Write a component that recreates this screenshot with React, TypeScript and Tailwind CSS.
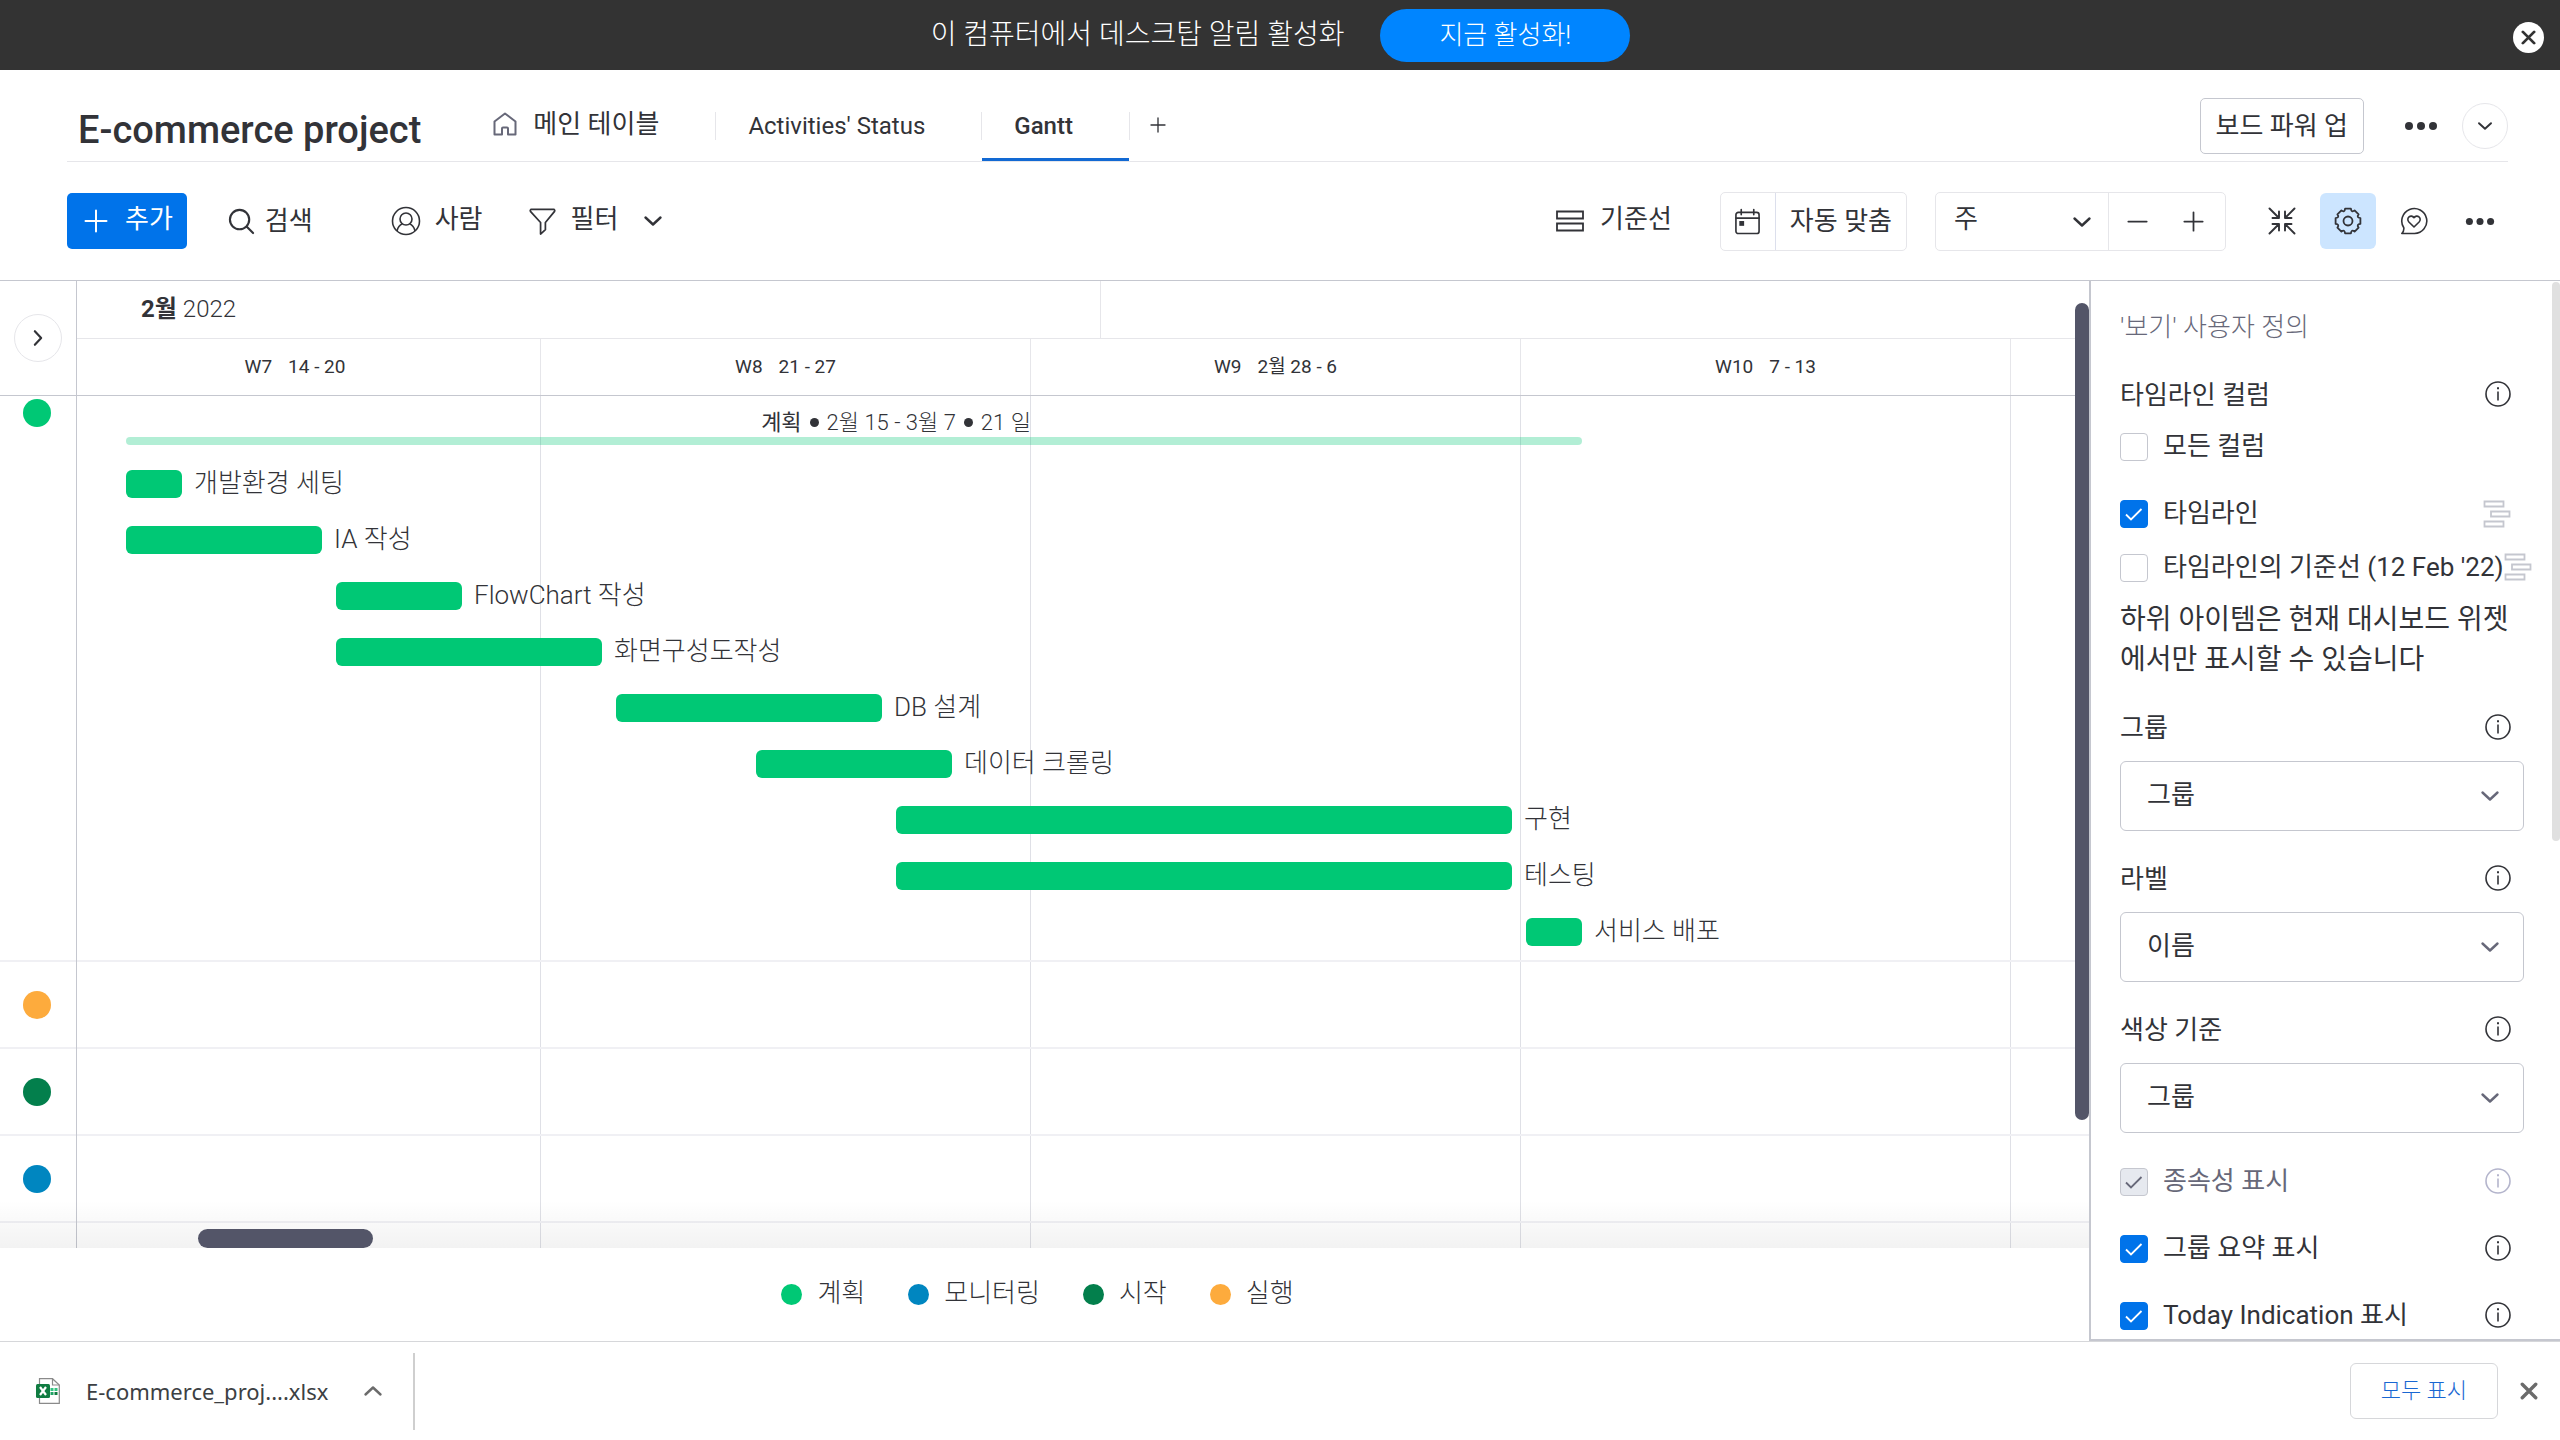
import { useState } from "react";
import type { ReactNode } from "react";

const DAY = 70;
const BAR_GAP = 14;

const weeks = [
  { name: "W7", range: "14 - 20" },
  { name: "W8", range: "21 - 27" },
  { name: "W9", range: "2월 28 - 6" },
  { name: "W10", range: "7 - 13" },
];

const tasks = [
  { name: "개발환경 세팅", start: 0, days: 1 },
  { name: "IA 작성", start: 0, days: 3 },
  { name: "FlowChart 작성", start: 3, days: 2 },
  { name: "화면구성도작성", start: 3, days: 4 },
  { name: "DB 설계", start: 7, days: 4 },
  { name: "데이터 크롤링", start: 9, days: 3 },
  { name: "구현", start: 11, days: 9 },
  { name: "테스팅", start: 11, days: 9 },
  { name: "서비스 배포", start: 20, days: 1 },
];

const legend = [
  { name: "계획", color: "bg-[#00c875]" },
  { name: "모니터링", color: "bg-[#0086c0]" },
  { name: "시작", color: "bg-[#037f4c]" },
  { name: "실행", color: "bg-[#fdab3d]" },
];

/* ---------- icons ---------- */

type IconProps = { className?: string };

function Chevron({ className = "" }: IconProps) {
  return (
    <svg viewBox="0 0 20 20" fill="none" stroke="currentColor" strokeWidth="2.4" strokeLinecap="round" strokeLinejoin="round" className={className} aria-hidden="true">
      <path d="M2.5 6.5 10 13.5 17.5 6.5" />
    </svg>
  );
}

function Plus({ className = "" }: IconProps) {
  return (
    <svg viewBox="0 0 24 24" fill="none" stroke="currentColor" strokeWidth="2" strokeLinecap="round" className={className} aria-hidden="true">
      <path d="M12 1.5v21M1.5 12h21" />
    </svg>
  );
}

function Minus({ className = "" }: IconProps) {
  return (
    <svg viewBox="0 0 24 24" fill="none" stroke="currentColor" strokeWidth="2" strokeLinecap="round" className={className} aria-hidden="true">
      <path d="M1.5 12h21" />
    </svg>
  );
}

function Dots({ className = "" }: IconProps) {
  return (
    <svg viewBox="0 0 34 12" fill="currentColor" className={className} aria-hidden="true">
      <circle cx="5" cy="6" r="4" />
      <circle cx="17" cy="6" r="4" />
      <circle cx="29" cy="6" r="4" />
    </svg>
  );
}

function Home({ className = "" }: IconProps) {
  return (
    <svg viewBox="0 0 24 24" fill="none" stroke="currentColor" strokeWidth="2" strokeLinejoin="round" className={className} aria-hidden="true">
      <path d="M1.5 9.5 12 1.5l10.5 8v13H15V16.500q0-1-1-1h-4q-1 0-1 1v6H1.500z" />
    </svg>
  );
}

function SearchIcon({ className = "" }: IconProps) {
  return (
    <svg viewBox="0 0 28 28" fill="none" stroke="currentColor" strokeWidth="2.2" strokeLinecap="round" className={className} aria-hidden="true">
      <circle cx="12" cy="12" r="10" />
      <path d="M19.5 19.5 26 26" />
    </svg>
  );
}

function Person({ className = "" }: IconProps) {
  return (
    <svg viewBox="0 0 30 30" fill="none" stroke="currentColor" strokeWidth="1.6" strokeLinejoin="round" className={className} aria-hidden="true">
      <circle cx="15" cy="15" r="13.5" />
      <circle cx="15" cy="13" r="6" />
      <path d="M6 25c.8-3.800 3-6.300 5.500-7.300M24 25c-.8-3.800-3-6.300-5.500-7.300" />
    </svg>
  );
}

function Filter({ className = "" }: IconProps) {
  return (
    <svg viewBox="0 0 28 28" fill="none" stroke="currentColor" strokeWidth="1.8" strokeLinejoin="round" className={className} aria-hidden="true">
      <path d="M2 1.500h24q1.200 1 .3 2.300L17 15v7.500l-5 4.500V15L1.700 3.800Q.8 2.500 2 1.500z" />
    </svg>
  );
}

function Baseline({ className = "" }: IconProps) {
  return (
    <svg viewBox="0 0 28 22" fill="none" stroke="currentColor" strokeWidth="1.8" className={className} aria-hidden="true">
      <path d="M1 1.5h26v7H1zM1 13.5h26v7H1z" />
    </svg>
  );
}

function CalendarIcon({ className = "" }: IconProps) {
  return (
    <svg viewBox="0 0 28 28" fill="none" stroke="currentColor" strokeWidth="1.7" strokeLinecap="round" className={className} aria-hidden="true">
      <rect x="2" y="4.5" width="24" height="22" rx="2.5" />
      <path d="M2 10.5h24M7.5 1.5V7M20.5 1.5V7" />
      <rect x="5.5" y="13.5" width="5" height="5" fill="currentColor" stroke="none" />
    </svg>
  );
}

function Collapse({ className = "" }: IconProps) {
  return (
    <svg viewBox="0 0 28 28" fill="none" stroke="currentColor" strokeWidth="1.9" strokeLinecap="round" strokeLinejoin="round" className={className} aria-hidden="true">
      <path d="M1.5 1.500 10.500 10.500M11 4.500V11H4.500M26.500 1.500 17.500 10.500M17 4.500V11h6.500M1.500 26.500 10.500 17.500M11 23.500V17H4.500M26.500 26.500 17.500 17.500M17 23.500V17h6.500" />
    </svg>
  );
}

function Gear({ className = "" }: IconProps) {
  return (
    <svg viewBox="0 0 28 28" fill="none" stroke="currentColor" strokeWidth="1.8" strokeLinejoin="round" className={className} aria-hidden="true">
      <path d="M11.100 1.600h5.800Q17.400 5.900 20.600 3.400L24.600 7.400Q22.100 10.600 26.400 11.100v5.800Q22.100 17.400 24.600 20.600L20.600 24.600Q17.400 22.100 16.900 26.400h-5.800Q10.600 22.100 7.400 24.600L3.400 20.600Q5.900 17.400 1.600 16.900v-5.800Q5.900 10.600 3.400 7.400L7.400 3.400Q10.600 5.900 11.100 1.600z" />
      <circle cx="14" cy="14" r="4.5" />
    </svg>
  );
}

function HeartBubble({ className = "" }: IconProps) {
  return (
    <svg viewBox="0 0 28 28" fill="none" stroke="currentColor" strokeWidth="1.600" strokeLinejoin="round" className={className} aria-hidden="true">
      <path d="M3.800 20.800A12.500 12.500 0 1 1 14.500 26.500H1.800q2.400-2.200 2-5.700z" />
      <path d="M14 20 8.900 15c-3.400-3.900 2.100-8.400 5.100-4.300 3-4.100 8.500.4 5.100 4.300z" />
    </svg>
  );
}

function Info({ className = "" }: IconProps) {
  return (
    <svg viewBox="0 0 26 26" fill="none" stroke="currentColor" strokeWidth="1.6" className={className} aria-hidden="true">
      <circle cx="13" cy="13" r="12" />
      <path d="M13 10.5v9" />
      <path d="M13 6.2v2" strokeWidth="2" />
    </svg>
  );
}

function TimelineGlyph({ className = "" }: IconProps) {
  return (
    <svg viewBox="0 0 28 28" fill="none" stroke="currentColor" strokeWidth="1.8" className={className} aria-hidden="true">
      <path d="M1.5 1.5h19v5h-19zM8 11.5h18.5v5H8zM1.5 21.5h19v5h-19z" />
    </svg>
  );
}

function CloseMark({ className = "" }: IconProps) {
  return (
    <svg viewBox="0 0 16 16" fill="none" stroke="currentColor" strokeWidth="3" strokeLinecap="round" className={className} aria-hidden="true">
      <path d="M2 2l12 12M14 2 2 14" />
    </svg>
  );
}

function ExcelIcon({ className = "" }: IconProps) {
  return (
    <svg viewBox="0 0 24 26" className={className} aria-hidden="true">
      <path d="M3.5.7h13L23.300 7v18.300H3.500z" fill="#fff" stroke="#8a8a8a" strokeWidth="1.2" />
      <path d="M16.5.7V7h6.800" fill="none" stroke="#8a8a8a" strokeWidth="1.2" />
      <rect x="14.5" y="10" width="3" height="3" fill="#33c481" />
      <rect x="18.5" y="10" width="3" height="3" fill="#33c481" />
      <rect x="14.5" y="14" width="3" height="3" fill="#21a366" />
      <rect x="18.5" y="14" width="3" height="3" fill="#107c41" />
      <rect y="6" width="14" height="14" rx="1.5" fill="#107c41" />
      <path d="M4 9l6 8M10 9l-6 8" stroke="#fff" strokeWidth="2.2" />
    </svg>
  );
}

/* ---------- page parts ---------- */

function Banner() {
  return (
    <div className="flex h-[70px] items-center bg-[#333333] pr-4 text-white">
      <div className="flex flex-1 items-center justify-center gap-9 pl-12">
        <span className="text-[28px] leading-[66px] font-light">이 컴퓨터에서 데스크탑 알림 활성화</span>
        <button className="h-[53px] rounded-full bg-[#0085ff] px-[59px] text-[26px] leading-[48px] font-light">지금 활성화!</button>
      </div>
      <button aria-label="닫기" className="mt-1 flex size-[31px] items-center justify-center rounded-full bg-white text-[#333333]">
        <CloseMark className="size-[15px]" />
      </button>
    </div>
  );
}

function BoardHeader() {
  return (
    <header className="mr-[52px] ml-[67px] flex h-[92px] items-center border-b border-[#e6e6ea]">
      <h1 className="mt-7 pl-[11px] text-[38px] leading-[50px] font-medium">E-commerce project</h1>
      <nav className="ml-11 flex h-full items-end text-2xl">
        <button className="flex h-[92px] items-center gap-4 pt-[22px] pr-14 pb-1 pl-7">
          <Home className="size-6 text-[#676879]" />
          <span className="text-[26px]">메인 테이블</span>
        </button>
        <i className="mb-[21px] h-7 w-px bg-[#e6e6ea]" />
        <button className="h-[92px] pt-[25px] pr-14 pb-1 pl-8">Activities&apos; Status</button>
        <i className="mb-[21px] h-7 w-px bg-[#e6e6ea]" />
        <button className="h-[92px] border-b-[3px] border-[#1269d3] pt-[25px] pr-14 pb-px pl-8 font-medium">Gantt</button>
        <i className="mb-[21px] h-7 w-px bg-[#e6e6ea]" />
        <button aria-label="보기 추가" className="h-[92px] px-5 pt-[19px]">
          <Plus className="size-4" />
        </button>
      </nav>
      <div className="ml-auto flex items-center pt-5">
        <button className="h-14 rounded-[5px] border border-[#c5c7cf] px-[15px] text-[26px] leading-[50px]">보드 파워 업</button>
        <button aria-label="더 보기" className="ml-[39px]">
          <Dots className="h-3 w-[36px]" />
        </button>
        <button aria-label="접기" className="ml-[23px] flex size-[46px] items-center justify-center rounded-full border border-[#e6e6ea]">
          <Chevron className="size-4" />
        </button>
      </div>
    </header>
  );
}

function Toolbar() {
  return (
    <div className="flex h-[119px] items-center border-b border-[#c5c7cf] pr-[52px] pl-[67px] text-[26px] leading-[50px]">
      <button className="flex h-14 items-center gap-[17px] rounded-[5px] bg-[#0073ea] pr-[14px] pl-[17px] text-white">
        <Plus className="size-6" />
        <span className="-mt-1">추가</span>
      </button>
      <button className="ml-[41px] flex items-center gap-[10px]">
        <SearchIcon className="size-[27px]" />
        <span>검색</span>
      </button>
      <button className="ml-[78px] flex items-center gap-[14px]">
        <Person className="size-[30px]" />
        <span className="-mt-1">사람</span>
      </button>
      <button className="ml-[46px] flex items-center gap-[15px]">
        <Filter className="size-[27px]" />
        <span className="-mt-1">필터</span>
      </button>
      <button aria-label="필터 옵션" className="ml-[25px]">
        <Chevron className="size-5" />
      </button>

      <button className="ml-auto flex items-center gap-4">
        <Baseline className="h-[22px] w-7" />
        <span className="-mt-1">기준선</span>
      </button>
      <div className="ml-12 flex h-[59px] items-stretch rounded-[5px] border border-[#e6e6ea]">
        <button aria-label="오늘" className="flex w-[55px] items-center justify-center border-r border-[#dcdfec]">
          <CalendarIcon className="size-[27px]" />
        </button>
        <button className="px-[14px]">자동 맞춤</button>
      </div>
      <div className="ml-7 flex h-[59px] items-stretch rounded-[5px] border border-[#e6e6ea]">
        <div className="relative w-[173px] border-r border-[#e6e6ea]">
          <select aria-label="확대 단위" defaultValue="주" className="size-full appearance-none bg-transparent pb-1 pl-[18px]">
            <option>주</option>
          </select>
          <Chevron className="pointer-events-none absolute top-[19px] right-4 size-5" />
        </div>
        <button aria-label="축소" className="w-[58px] pl-[18px]">
          <Minus className="size-[21px]" />
        </button>
        <button aria-label="확대" className="w-[58px] pl-[16px]">
          <Plus className="size-[21px]" />
        </button>
      </div>
      <button aria-label="모두 접기" className="ml-7 flex size-14 items-center justify-center">
        <Collapse className="size-[28px]" />
      </button>
      <button aria-label="설정" className="ml-[10px] flex size-14 items-center justify-center rounded-[6px] bg-[#cce5ff]">
        <Gear className="size-[28px]" />
      </button>
      <button aria-label="피드백" className="ml-[10px] flex size-14 items-center justify-center">
        <HeartBubble className="size-[28px]" />
      </button>
      <button aria-label="더 보기" className="ml-[10px] flex h-14 w-[56px] items-center justify-center">
        <Dots className="h-[11px] w-[30px]" />
      </button>
    </div>
  );
}

function GroupCell({ color }: { color: string }) {
  return (
    <div className="flex h-[87px] items-center border-b-2 border-[#f0f0f4] pl-[23px]">
      <i className={`size-7 rounded-full ${color}`} />
    </div>
  );
}

function GroupRail() {
  return (
    <div className="flex w-[77px] shrink-0 flex-col border-r border-[#c5c7cf]">
      <div className="flex h-[115px] items-center justify-center border-b border-[#c5c7cf]">
        <button aria-label="펼치기" className="flex size-12 items-center justify-center rounded-full border border-[#e6e6ea]">
          <Chevron className="size-[18px] -rotate-90" />
        </button>
      </div>
      <div className="h-[566px] border-b-2 border-[#f0f0f4] pt-[3px] pl-[23px]">
        <i className="block size-7 rounded-full bg-[#00c875]" />
      </div>
      <GroupCell color="bg-[#fdab3d]" />
      <GroupCell color="bg-[#037f4c]" />
      <GroupCell color="bg-[#0086c0]" />
    </div>
  );
}

function Timeline() {
  return (
    <div className="relative flex min-w-0 flex-1 flex-col overflow-hidden">
      <div className="flex h-[58px] border-b border-[#e6e6ea] text-2xl">
        <div className="w-[1024px] shrink-0 border-r border-[#e6e6ea] pl-16 leading-[57px]">
          <b>2월</b> <span className="font-light">2022</span>
        </div>
      </div>
      <div className="-ml-[27px] flex h-[57px] border-b border-[#c5c7cf] text-[19px] leading-[55px]">
        {weeks.map((w) => (
          <div key={w.name} className="flex w-[491px] shrink-0 justify-center gap-4 border-r border-[#e6e6ea] not-first:w-[490px]">
            <span>{w.name}</span>
            <span>{w.range}</span>
          </div>
        ))}
      </div>
      <div className="relative flex-1">
        <div className="absolute inset-y-0 -left-[27px] flex">
          {weeks.map((w) => (
            <i key={w.name} className="w-[491px] shrink-0 border-r border-[#dfe0e6] not-first:w-[490px]" />
          ))}
        </div>
        <div className="relative h-[566px] border-b-2 border-[#f0f0f4] pl-[49px]">
          <div className="h-[60px] w-[1456px]">
            <p className="flex h-[41px] items-center justify-center gap-2 pt-3 pl-[84px] text-[22px] leading-[29px] font-light">
              <b>계획</b>
              <i className="size-[9px] rounded-full bg-[#323338]" />
              <span>2월 15 - 3월 7</span>
              <i className="size-[9px] rounded-full bg-[#323338]" />
              <span>21 일</span>
            </p>
            <div className="h-2 rounded-full bg-[#00c875]/30" />
          </div>
          {tasks.map((t) => (
            <div key={t.name} className="flex h-14 items-center gap-3" style={{ paddingLeft: t.start * DAY }}>
              <div className="h-7 shrink-0 rounded-[6px] bg-[#00c875]" style={{ width: t.days * DAY - BAR_GAP }} />
              <span className="-mt-0.5 text-[26px] leading-9 font-light whitespace-nowrap">{t.name}</span>
            </div>
          ))}
        </div>
        <div className="relative h-[87px] border-b-2 border-[#f0f0f4]" />
        <div className="relative h-[87px] border-b-2 border-[#f0f0f4]" />
        <div className="relative h-[87px] border-b-2 border-[#f0f0f4]" />
      </div>
      <i className="absolute top-[22px] right-0 h-[817px] w-[14px] rounded-full bg-[#535568]" />
    </div>
  );
}

function Legend() {
  return (
    <ul className="flex h-[93px] items-center justify-center gap-[43px] bg-white pr-[14px] text-[26px] leading-[88px] font-light">
      {legend.map((l) => (
        <li key={l.name} className="flex items-center gap-[15px]">
          <i className={`size-[21px] rounded-full ${l.color}`} />
          <span className="-mt-1">{l.name}</span>
        </li>
      ))}
    </ul>
  );
}

type CheckProps = { label: string; checked?: boolean; disabled?: boolean; children?: ReactNode };

function Check({ label, checked = false, disabled = false, children }: CheckProps) {
  const [on, setOn] = useState(checked);
  return (
    <div className="flex h-7 items-center">
      <label className={`flex items-center gap-[15px] whitespace-nowrap ${disabled ? "text-[#676879]" : ""}`}>
        <span className="relative size-7">
          <input
            type="checkbox"
            checked={on}
            disabled={disabled}
            onChange={() => setOn(!on)}
            className="block size-7 appearance-none rounded-[4px] border border-[#c5c7cf] bg-white checked:border-[#0073ea] checked:bg-[#0073ea] disabled:border-[#c5c7cf] disabled:bg-[#e6e9ef]"
          />
          {on && (
            <svg viewBox="0 0 28 28" fill="none" stroke={disabled ? "#676879" : "#fff"} strokeWidth="1.8" className="pointer-events-none absolute inset-0 size-7" aria-hidden="true">
              <path d="m6 14.5 5 5L21.500 9" />
            </svg>
          )}
        </span>
        <span className="-mt-0.5">{label}</span>
      </label>
      {children}
    </div>
  );
}

function InfoButton({ muted = false }: { muted?: boolean }) {
  return (
    <button aria-label="정보" className={`mr-[13px] -mt-0.5 ml-auto ${muted ? "text-[#b4b5cc]" : ""}`}>
      <Info className="size-[26px]" />
    </button>
  );
}

function Field({ id, label, value }: { id: string; label: string; value: string }) {
  return (
    <div className="mb-[30px]">
      <div className="flex h-[35px] items-center">
        <label htmlFor={id}>{label}</label>
        <InfoButton />
      </div>
      <div className="relative mt-4 h-[70px]">
        <select id={id} defaultValue={value} className="size-full appearance-none rounded-[6px] border border-[#c5c7cf] bg-white pb-0.5 pl-[26px]">
          <option>{value}</option>
        </select>
        <Chevron className="pointer-events-none absolute top-[25px] right-6 size-5 text-[#676879]" />
      </div>
    </div>
  );
}

function SettingsPanel() {
  return (
    <aside className="relative w-[471px] shrink-0 border-b-2 border-l-2 border-[#c5c7cf] bg-white pr-9 pl-[29px] text-[26px] leading-10">
      <h2 className="pt-[26px] font-light text-[#676879]">&apos;보기&apos; 사용자 정의</h2>
      <div className="mt-[34px] flex h-7 items-center">
        <h3>타임라인 컬럼</h3>
        <InfoButton />
      </div>
      <div className="mt-6">
        <Check label="모든 컬럼" />
      </div>
      <div className="mt-[39px]">
        <Check label="타임라인" checked>
          <TimelineGlyph className="mr-[13px] ml-auto size-7 text-[#c5c7cf]" />
        </Check>
      </div>
      <div className="mt-[26px]">
        <Check label="타임라인의 기준선 (12 Feb '22)">
          <TimelineGlyph className="-mt-0.5 size-7 shrink-0 text-[#c5c7cf]" />
        </Check>
      </div>
      <p className="mt-[18px] mb-[30px] text-[28px] break-all">하위 아이템은 현재 대시보드 위젯에서만 표시할 수 있습니다</p>
      <Field id="group-by" label="그룹" value="그룹" />
      <Field id="label-by" label="라벨" value="이름" />
      <Field id="color-by" label="색상 기준" value="그룹" />
      <div className="mt-[35px] flex flex-col gap-[39px]">
        <Check label="종속성 표시" checked disabled>
          <InfoButton muted />
        </Check>
        <Check label="그룹 요약 표시" checked>
          <InfoButton />
        </Check>
        <Check label="Today Indication 표시" checked>
          <InfoButton />
        </Check>
      </div>
      <i className="absolute top-px right-0 h-[559px] w-2 rounded-full bg-[#e0e0e0]" />
    </aside>
  );
}

function DownloadBar() {
  return (
    <footer className="flex h-[99px] items-center border-t border-[#d6d7da] bg-white pr-[22px]">
      <button className="flex items-center pl-9 [font-family:'Noto_Sans','Noto_Sans_CJK_KR',sans-serif] text-[22px] text-[#3c4043]">
        <ExcelIcon className="h-[26px] w-6" />
        <span className="ml-[26px]">E-commerce_proj....xlsx</span>
      </button>
      <button aria-label="다운로드 메뉴" className="ml-[35px] text-[#6b6b6b]">
        <Chevron className="size-5 rotate-180" />
      </button>
      <i className="ml-[30px] h-[77px] w-[2px] bg-[#cfcfcf]" />
      <button className="ml-auto h-14 rounded-[6px] border border-[#d6d7da] px-[30px] text-[22px] leading-[48px] font-light text-[#1967d2]">모두 표시</button>
      <button aria-label="닫기" className="ml-[22px] text-[#6b6b6b]">
        <CloseMark className="size-[18px]" />
      </button>
    </footer>
  );
}

export default function App() {
  return (
    <div className="flex min-h-screen flex-col overflow-hidden bg-white [font-family:Roboto,'Noto_Sans_CJK_KR',sans-serif] text-[#323338]">
      <Banner />
      <BoardHeader />
      <Toolbar />
      <main className="flex flex-1">
        <section className="flex min-w-0 flex-1 flex-col">
          <div className="relative flex flex-1">
            <GroupRail />
            <Timeline />
            <i className="pointer-events-none absolute inset-x-0 bottom-0 h-12 bg-linear-to-t from-black/5 to-transparent" />
            <i className="absolute bottom-0 left-[198px] h-[19px] w-[175px] rounded-full bg-[#535568]" />
          </div>
          <Legend />
        </section>
        <SettingsPanel />
      </main>
      <DownloadBar />
    </div>
  );
}
